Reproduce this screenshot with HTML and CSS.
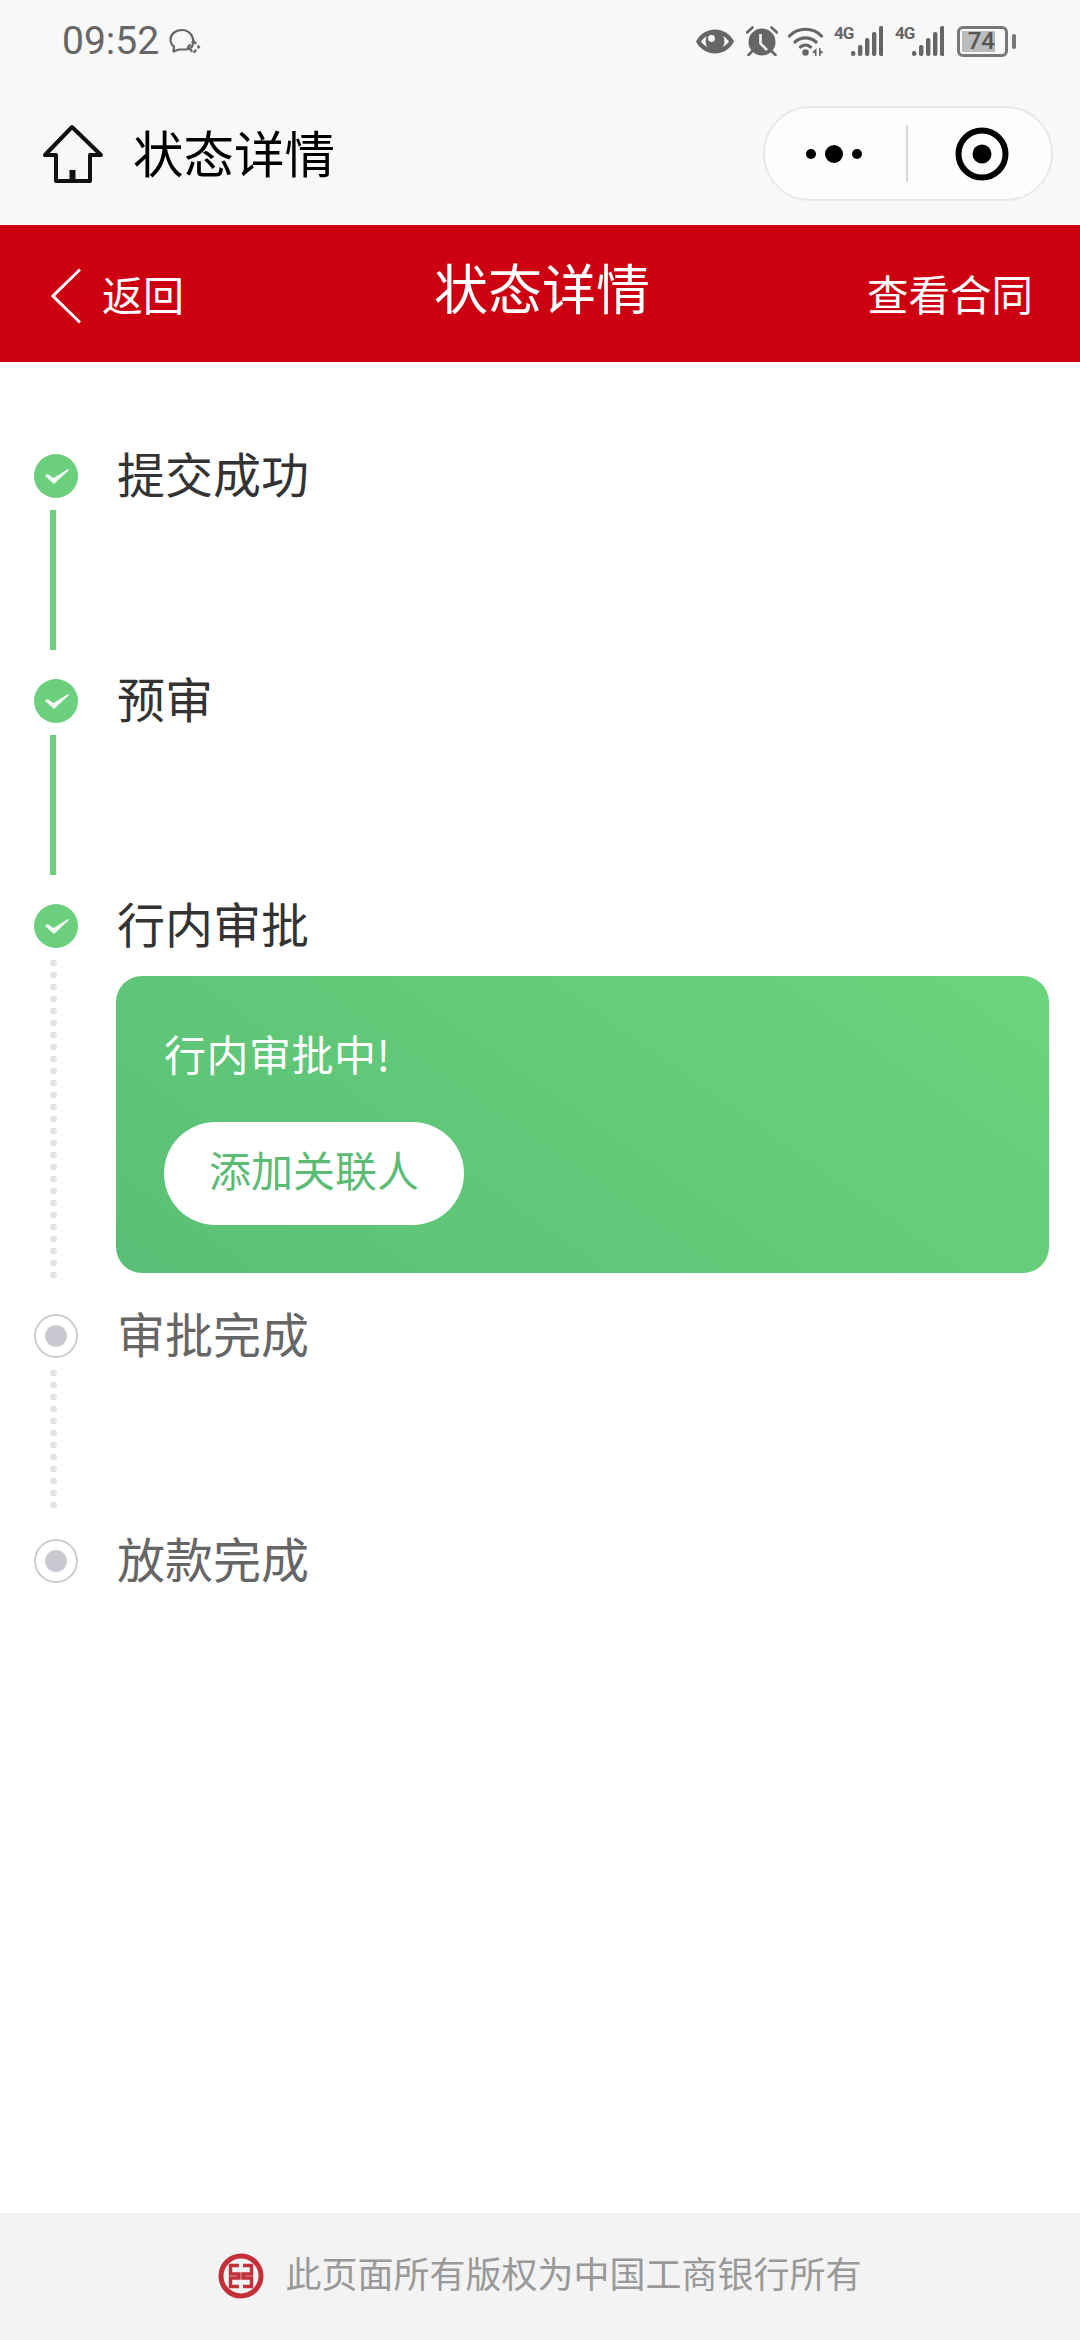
FILE: index.html
```html
<!DOCTYPE html>
<html lang="zh-CN">
<head>
  <meta charset="UTF-8" />
  <title>状态详情</title>
  <link rel="stylesheet" href="styles.css">
</head>
<body>
<div class="page">
  <!-- system status bar -->
  <div class="status-bar">
    <span class="time">09:52</span>
    <svg class="st-chat" width="32" height="27" viewBox="0 0 32 27" fill="none" stroke="#666" stroke-width="2.2">
      <path d="M17 21.5 C21 21 24 19 24 15 C25 9 21 2 13 2 C6 2 1.5 6.5 1.5 11.5 C1.5 15 3.5 17.5 5 18.5 L4.5 23.5 L10 21.5 Z" stroke-linejoin="round"/>
      <path d="M24.5 13 L30 19 L24.5 25 L19 19 Z" stroke-dasharray="4 2"/>
    </svg>
    <div class="status-icons">
      <svg width="38" height="25" viewBox="0 0 38 25">
        <path d="M0 12.5 C8 -3.5 30 -3.5 38 12.5 C30 28.5 8 28.5 0 12.5Z" fill="#666"/>
        <path d="M5 12.5 C11 3 27 3 33 12.5 C27 22 11 22 5 12.5Z" fill="#f8f8f8"/>
        <circle cx="19" cy="12.5" r="9.5" fill="#666"/>
        <circle cx="15.5" cy="9.5" r="3.4" fill="#f8f8f8"/>
      </svg>
      <svg class="st-clock" width="32" height="30" viewBox="0 0 32 30">
        <circle cx="16" cy="16" r="13.5" fill="#666"/>
        <path d="M14.5 8 V17.5 L21 24" fill="none" stroke="#f8f8f8" stroke-width="2.6"/>
        <path d="M1 6.5 L6.5 1.5 M25.5 1.5 L31 6.5 M6 25.5 L2.5 29 M26 25.5 L29.5 29" stroke="#666" stroke-width="2.6" stroke-linecap="round"/>
      </svg>
      <svg class="st-wifi" width="39" height="30" viewBox="0 0 39 30">
        <path d="M1.5 10 C10 1 25 1 33.5 10 M7 16 C13 10.5 22 10.5 28 16 M12.5 21 C15.5 18.5 19.5 18.5 22.5 21" fill="none" stroke="#666" stroke-width="3.2" stroke-linecap="round"/>
        <circle cx="17.5" cy="26.5" r="3.2" fill="#666"/>
        <path d="M28.5 22 V30 H27 V27 H24.5 V26 Z M31 22 H32.5 V24.5 L35.5 26 L32.5 28 V30 H31 Z" fill="#666"/>
      </svg>
      <div class="st-signal">
        <span class="net">4G</span>
        <svg width="32" height="30" viewBox="0 0 32 30" fill="#666">
          <rect x="0" y="25" width="4.4" height="5" rx="2"/>
          <rect x="7" y="19" width="4.4" height="11" rx="2"/>
          <rect x="14" y="12" width="4.4" height="18" rx="2"/>
          <rect x="21" y="6" width="4.4" height="24" rx="2"/>
          <rect x="28" y="0" width="4.4" height="30" rx="2"/>
        </svg>
      </div>
      <div class="st-signal st-signal-2">
        <span class="net">4G</span>
        <svg width="32" height="30" viewBox="0 0 32 30" fill="#666">
          <rect x="0" y="25" width="4.4" height="5" rx="2"/>
          <rect x="7" y="19" width="4.4" height="11" rx="2"/>
          <rect x="14" y="12" width="4.4" height="18" rx="2"/>
          <rect x="21" y="6" width="4.4" height="24" rx="2"/>
          <rect x="28" y="0" width="4.4" height="30" rx="2"/>
        </svg>
      </div>
      <div class="battery">
        <div class="battery-body"><span class="battery-fill">74</span></div>
        <div class="battery-nub"></div>
      </div>
    </div>
  </div>

  <!-- mini program title bar -->
  <div class="app-bar">
    <svg class="home-icon" width="60" height="60" viewBox="0 0 60 60">
      <path d="M29 3 L2 31 H13 V57 H47 V31 H58 Z" fill="none" stroke="#111" stroke-width="4" stroke-linejoin="round"/>
      <rect x="26.5" y="46" width="6" height="11" fill="#111"/>
    </svg>
    <span class="app-title">状态详情</span>
    <div class="capsule">
      <div class="capsule-more"><i class="dot"></i><i class="dot dot-big"></i><i class="dot"></i></div>
      <div class="capsule-line"></div>
      <svg width="56" height="56" viewBox="0 0 56 56">
        <circle cx="28" cy="28" r="23.5" fill="none" stroke="#000" stroke-width="6"/>
        <circle cx="28" cy="28" r="9.5" fill="#000"/>
      </svg>
    </div>
  </div>

  <!-- red page header -->
  <div class="header">
    <div class="back">
      <svg width="30" height="56" viewBox="0 0 30 56">
        <path d="M29 1.5 L2 28 L29 54.5" fill="none" stroke="#fff" stroke-width="3"/>
      </svg>
      <span class="back-text">返回</span>
    </div>
    <div class="header-title">状态详情</div>
    <div class="header-link">查看合同</div>
  </div>

  <div class="steps">
    <div class="step">
      <div class="rail">
        <svg class="mark" width="44" height="44" viewBox="0 0 44 44"><circle cx="22" cy="22" r="22" fill="#6bcf7e"/><path d="M11 22 L13.5 20 L19.5 24 L34 15 L35 16 L20 30 Z" fill="#f4fbf5"/></svg>
        <div class="line"></div>
      </div>
      <div class="step-body"><div class="step-title">提交成功</div></div>
    </div>
    <div class="step">
      <div class="rail">
        <svg class="mark" width="44" height="44" viewBox="0 0 44 44"><circle cx="22" cy="22" r="22" fill="#6bcf7e"/><path d="M11 22 L13.5 20 L19.5 24 L34 15 L35 16 L20 30 Z" fill="#f4fbf5"/></svg>
        <div class="line"></div>
      </div>
      <div class="step-body"><div class="step-title">预审</div></div>
    </div>
    <div class="step step-current">
      <div class="rail">
        <svg class="mark" width="44" height="44" viewBox="0 0 44 44"><circle cx="22" cy="22" r="22" fill="#6bcf7e"/><path d="M11 22 L13.5 20 L19.5 24 L34 15 L35 16 L20 30 Z" fill="#f4fbf5"/></svg>
        <div class="line line-dots"></div>
      </div>
      <div class="step-body">
        <div class="step-title">行内审批</div>
        <div class="notice">
          <div class="notice-text">行内审批中!</div>
          <div class="notice-btn">添加关联人</div>
        </div>
      </div>
    </div>
    <div class="step step-todo">
      <div class="rail">
        <div class="mark-todo"><i></i></div>
        <div class="line line-dots"></div>
      </div>
      <div class="step-body"><div class="step-title">审批完成</div></div>
    </div>
    <div class="step step-todo step-last">
      <div class="rail">
        <div class="mark-todo"><i></i></div>
      </div>
      <div class="step-body"><div class="step-title">放款完成</div></div>
    </div>
  </div>

  <div class="footer">
    <svg width="46" height="46" viewBox="0 0 46 46" fill="none" stroke="#c4303a">
      <circle cx="23" cy="23" r="20" stroke-width="5"/>
      <path d="M21 12.5 H12.5 V21 H21 V25 H12.5 V33.5 H21 M25 12.5 H33.5 V21 H25 V25 H33.5 V33.5 H25" stroke-width="3.4"/>
    </svg>
    <span class="footer-text">此页面所有版权为中国工商银行所有</span>
  </div>
</div>
</body>
</html>
```

FILE: styles.css
```css
* {
  box-sizing: border-box;
}

body {
  margin: 0;
  background: #fff;
  font-family: "Noto Sans CJK SC", "Noto Sans", sans-serif;
}

.page {
  width: 1080px;
  height: 2340px;
  display: flex;
  flex-direction: column;
}

/* status bar */
.status-bar {
  height: 82px;
  background: #f8f8f8;
  display: flex;
  align-items: center;
  padding: 0 64px 0 62px;
  color: #666;
}

.time {
  font-family: Roboto, sans-serif;
  font-size: 39px;
  line-height: 44px;
}

.st-chat {
  margin-left: 10px;
}

.status-icons {
  margin-left: auto;
  display: flex;
  align-items: center;
}

.st-clock {
  margin-left: 12px;
}

.st-wifi {
  margin-left: 10px;
}

.st-signal {
  margin-left: 7px;
  display: flex;
  align-items: flex-start;
}

.st-signal-2 {
  margin-left: 12px;
}

.net {
  width: 17px;
  font-family: Roboto, sans-serif;
  font-size: 17px;
  font-weight: 700;
  line-height: 14px;
  letter-spacing: -1px;
}

.battery {
  margin-left: 13px;
  display: flex;
  align-items: center;
  gap: 4px;
}

.battery-body {
  width: 51px;
  height: 31px;
  border: 3px solid #777;
  border-radius: 6px;
  padding: 2px;
}

.battery-fill {
  display: block;
  width: 33px;
  height: 100%;
  background: #bbb;
  color: #555;
  font-family: Roboto, sans-serif;
  font-size: 24px;
  font-weight: 500;
  line-height: 21px;
  text-align: right;
}

.battery-nub {
  width: 4px;
  height: 15px;
  border-radius: 2px;
  background: #777;
}

/* title bar */
.app-bar {
  height: 143px;
  background: #f8f8f8;
  display: flex;
  align-items: center;
  padding: 0 27px 0 43px;
}

.home-icon {
  margin-right: 30px;
}

.app-title {
  font-size: 50.5px;
  line-height: 60px;
  margin-bottom: 6px;
  color: #000;
}

.capsule {
  margin-left: auto;
  width: 290px;
  height: 95px;
  background: #fdfdfd;
  border: 2px solid #e8e8e8;
  border-radius: 48px;
  display: flex;
  align-items: center;
  padding-left: 41px;
}

.capsule-more {
  width: 56px;
  display: flex;
  align-items: center;
  justify-content: space-between;
}

.dot {
  width: 10px;
  height: 10px;
  border-radius: 50%;
  background: #000;
}

.dot-big {
  width: 18px;
  height: 18px;
}

.capsule-line {
  width: 1.5px;
  height: 57px;
  margin-left: 44px;
  background: #d8d8d8;
}

.capsule svg {
  margin-left: 46px;
}

/* red header */
.header {
  height: 137px;
  background: #cc0011;
  color: #fff;
  display: grid;
  grid-template-columns: 1fr auto 1fr;
  align-items: center;
  padding: 0 47px 0 51px;
}

.back {
  display: flex;
  align-items: center;
  gap: 21px;
  font-size: 41px;
  line-height: 50px;
  margin-top: 4px;
}

.back-text {
  margin-bottom: 6px;
}

.header-title {
  font-size: 54px;
  line-height: 60px;
  margin-bottom: 13px;
}

.header-link {
  justify-self: end;
  font-size: 41.5px;
  line-height: 50px;
  margin-bottom: 2px;
}

/* timeline */
.steps {
  padding: 92px 31px 0 34px;
}

.step {
  display: flex;
  gap: 38px;
}

.rail {
  width: 44px;
  flex-shrink: 0;
  display: flex;
  flex-direction: column;
  align-items: center;
}

.mark {
  display: block;
  flex-shrink: 0;
}

.line {
  width: 6px;
  height: 140px;
  margin: 12px 6px 29px 0;
  background: #6bcf7e;
}

.line-dots {
  width: 7px;
  height: 141px;
  margin-top: 9px;
  margin-bottom: 31px;
  background: radial-gradient(circle closest-side, #e3e3e6 92%, transparent) center top / 7px 12px repeat-y;
}

.step-current .line {
  flex: 1;
  height: auto;
  margin-bottom: 33px;
}

.step-body {
  flex: 1;
}

.step-title {
  font-size: 48px;
  line-height: 36px;
  margin-left: 1px;
  color: #333;
}

.step-current .step-body {
  padding-bottom: 41px;
}

.step-todo .step-title {
  color: #666;
}

.mark-todo {
  width: 44px;
  height: 44px;
  flex-shrink: 0;
  border: 2.5px solid #ccc;
  border-radius: 50%;
  display: flex;
  align-items: center;
  justify-content: center;
}

.mark-todo i {
  width: 22px;
  height: 22px;
  border-radius: 50%;
  background: #c8c9d0;
}

.notice {
  margin-top: 36px;
  height: 297px;
  padding: 55px 48px 48px;
  border-radius: 26px;
  background: linear-gradient(35deg, #5abf76, #6bd47d);
}

.notice-text {
  font-size: 42px;
  line-height: 44px;
  letter-spacing: 0.5px;
  color: #fff;
}

.notice-btn {
  margin-top: 47px;
  width: 300px;
  height: 103px;
  border-radius: 52px;
  background: #fff;
  color: #5cbb75;
  font-size: 42px;
  line-height: 94px;
  text-align: center;
}

/* footer */
.footer {
  margin-top: auto;
  height: 127px;
  padding-bottom: 2px;
  background: #f3f3f3;
  color: #999;
  font-size: 36px;
  display: flex;
  align-items: center;
  justify-content: center;
  gap: 21px;
}

.footer-text {
  margin-bottom: 7px;
}
```
